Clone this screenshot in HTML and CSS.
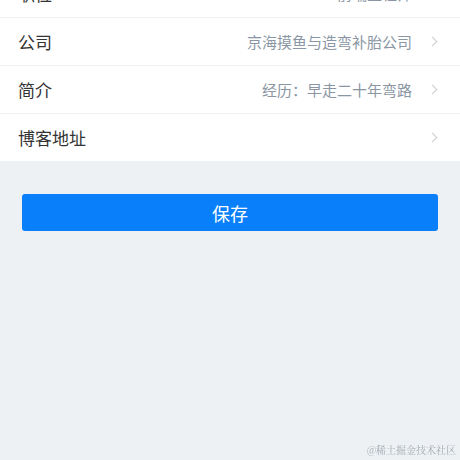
FILE: index.html
```html
<!DOCTYPE html>
<html lang="zh-CN">
<head>
    <meta charset="UTF-8">
    <meta name="viewport" content="width=device-width, initial-scale=1.0">
    <title>编辑资料</title>
    <link rel="stylesheet" href="styles.css">
</head>
<body>
    <main class="page">
        <ul class="form-list">
            <li class="form-item">
                <span class="form-label">职位</span>
                <span class="form-value">前端工程师</span>
                <span class="arrow"></span>
            </li>
            <li class="form-item">
                <span class="form-label">公司</span>
                <span class="form-value">京海摸鱼与造弯补胎公司</span>
                <span class="arrow"></span>
            </li>
            <li class="form-item">
                <span class="form-label">简介</span>
                <span class="form-value">经历：早走二十年弯路</span>
                <span class="arrow"></span>
            </li>
            <li class="form-item">
                <span class="form-label">博客地址</span>
                <span class="form-value"></span>
                <span class="arrow"></span>
            </li>
        </ul>

        <div class="actions">
            <button class="btn-save">保存</button>
        </div>
    </main>

    <div class="watermark">@稀土掘金技术社区</div>
</body>
</html>
```

FILE: styles.css
```css
html, body {
    margin: 0;
    padding: 0;
    height: 100%;
}

body {
    background-color: #eef1f4;
    font-family: "Noto Sans CJK SC", "Noto Sans", sans-serif;
    color: #333;
    overflow: hidden;
}

.page {
    display: flex;
    flex-direction: column;
}

.form-list {
    list-style: none;
    margin: -30px 0 0;
    padding: 0;
    background-color: #fff;
}

.form-item {
    display: flex;
    align-items: center;
    height: 47px;
    padding: 0 22px 0 18px;
    border-bottom: 1px solid #f2f3f5;
}

.form-item:last-child {
    border-bottom: none;
}

.form-label {
    font-size: 17px;
    color: #333;
}

.form-value {
    flex: 1;
    text-align: right;
    font-size: 15px;
    color: #8a96a3;
    margin-right: 17px;
}

.arrow {
    width: 6px;
    height: 6px;
    border-top: 1px solid #c9ccd1;
    border-right: 1px solid #c9ccd1;
    transform: rotate(45deg);
    margin-right: 2px;
}

.actions {
    padding: 33px 22px 0;
}

.btn-save {
    display: block;
    width: 100%;
    height: 37px;
    border: none;
    border-radius: 3px;
    background-color: #0a7ffa;
    color: #fff;
    font-family: "Noto Sans CJK SC", sans-serif;
    font-size: 18px;
    cursor: pointer;
}

.watermark {
    position: fixed;
    right: 4px;
    bottom: 3px;
    font-family: "Noto Serif CJK SC", "Noto Sans CJK SC", serif;
    font-size: 10px;
    color: #a3aab2;
}
```
